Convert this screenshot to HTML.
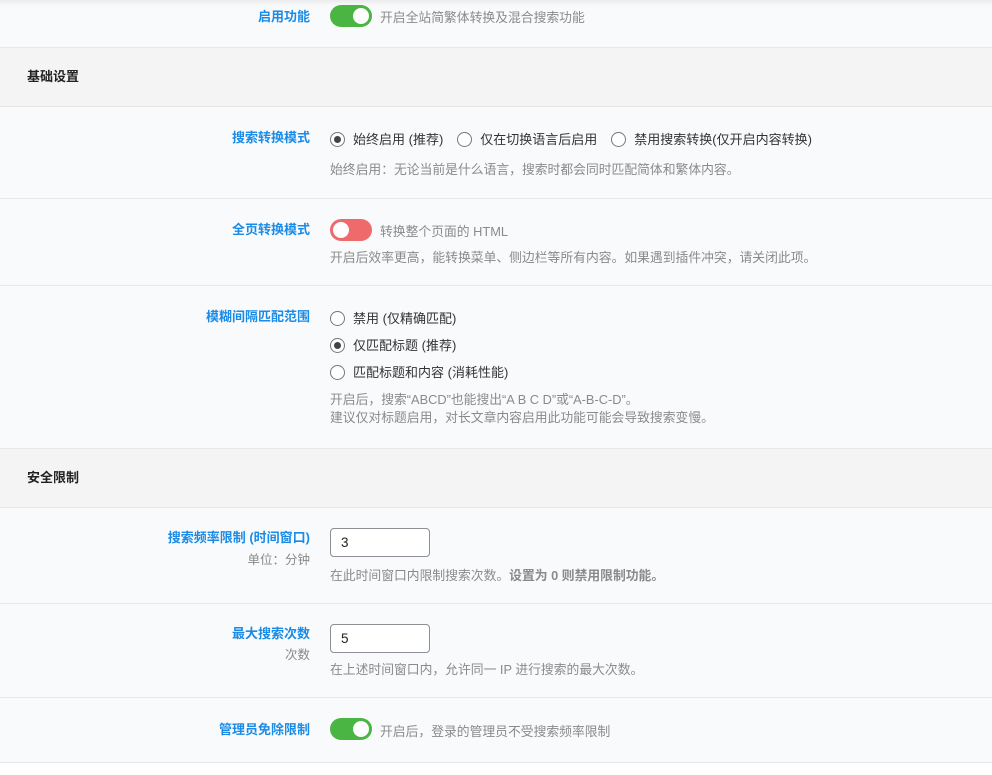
<!DOCTYPE html>
<html><head><meta charset="utf-8"><style>
*{box-sizing:border-box;margin:0;padding:0}
body{width:992px;height:775px;overflow:hidden;background:#fff;font-family:"Liberation Sans","Noto Sans CJK SC",sans-serif;font-size:13px;color:#333;position:relative}
.row{position:absolute;left:0;width:992px;background:#f9fafb;border-bottom:1px solid #e8e8ea}
.sec{position:absolute;left:0;width:992px;background:#f4f4f4;border-bottom:1px solid #e6e6e6;font-weight:bold;font-size:13px;color:#222;padding-left:27px}
.lbl{position:absolute;right:682px;text-align:right;color:#1a8be6;font-weight:bold;font-size:13px;white-space:nowrap}
.sub{position:absolute;right:682px;text-align:right;color:#888;font-size:12.5px;white-space:nowrap}
.t{position:absolute;left:330px;white-space:nowrap}
.desc{color:#8a8a8a;font-size:12.8px}
.tg{position:absolute;left:330px;width:42px;height:22px;border-radius:11px}
.tg::after{content:"";position:absolute;top:3px;width:16px;height:16px;border-radius:50%;background:#fff}
.on{background:#4bb543}.on::after{right:3px}
.off{background:#ef6b6b}.off::after{left:3px}
.rd{display:inline-block;width:15px;height:15px;border:1px solid #777;border-radius:50%;vertical-align:-3px;margin-right:8px;position:relative;background:#fff}
.rd.c::after{content:"";position:absolute;left:3px;top:3px;width:7px;height:7px;border-radius:50%;background:#444}
.inp{position:absolute;left:330px;width:100px;height:29px;border:1px solid #8c8f94;border-radius:4px;background:#fff;padding:6px 0 0 10px;font-size:13.5px;color:#222}
</style></head><body>
<div class="row" style="top:0;height:48px;box-shadow:inset 0 6px 6px -4px rgba(0,0,0,.08)"></div>
<div class="lbl" style="top:6px">启用功能</div>
<div class="tg on" style="top:5px"></div>
<div class="t desc" style="left:380px;top:7px">开启全站简繁体转换及混合搜索功能</div>

<div class="sec" style="top:48px;height:59px;line-height:57px">基础设置</div>

<div class="row" style="top:107px;height:92px"></div>
<div class="lbl" style="top:127px">搜索转换模式</div>
<div class="t" style="top:129px"><span class="rd c"></span>始终启用 (推荐)<span style="margin-left:14px" class="rd"></span>仅在切换语言后启用<span style="margin-left:14px" class="rd"></span>禁用搜索转换(仅开启内容转换)</div>
<div class="t desc" style="top:159px">始终启用：无论当前是什么语言，搜索时都会同时匹配简体和繁体内容。</div>

<div class="row" style="top:199px;height:87px"></div>
<div class="lbl" style="top:219px">全页转换模式</div>
<div class="tg off" style="top:219px"></div>
<div class="t desc" style="left:380px;top:221px">转换整个页面的 HTML</div>
<div class="t desc" style="top:247px">开启后效率更高，能转换菜单、侧边栏等所有内容。如果遇到插件冲突，请关闭此项。</div>

<div class="row" style="top:286px;height:163px"></div>
<div class="lbl" style="top:306px">模糊间隔匹配范围</div>
<div class="t" style="top:308px"><span class="rd"></span>禁用 (仅精确匹配)</div>
<div class="t" style="top:335px"><span class="rd c"></span>仅匹配标题 (推荐)</div>
<div class="t" style="top:362px"><span class="rd"></span>匹配标题和内容 (消耗性能)</div>
<div class="t desc" style="top:391px;line-height:18px">开启后，搜索“ABCD”也能搜出“A B C D”或“A-B-C-D”。<br>建议仅对标题启用，对长文章内容启用此功能可能会导致搜索变慢。</div>

<div class="sec" style="top:449px;height:59px;line-height:57px">安全限制</div>

<div class="row" style="top:508px;height:96px"></div>
<div class="lbl" style="top:527px">搜索频率限制 (时间窗口)</div>
<div class="sub" style="top:549px">单位：分钟</div>
<div class="inp" style="top:528px">3</div>
<div class="t desc" style="top:565px">在此时间窗口内限制搜索次数。<b>设置为 0 则禁用限制功能。</b></div>

<div class="row" style="top:604px;height:94px"></div>
<div class="lbl" style="top:623px">最大搜索次数</div>
<div class="sub" style="top:644px">次数</div>
<div class="inp" style="top:624px">5</div>
<div class="t desc" style="top:659px">在上述时间窗口内，允许同一 IP 进行搜索的最大次数。</div>

<div class="row" style="top:698px;height:65px"></div>
<div class="lbl" style="top:719px">管理员免除限制</div>
<div class="tg on" style="top:718px"></div>
<div class="t desc" style="left:380px;top:721px">开启后，登录的管理员不受搜索频率限制</div>
</body></html>
